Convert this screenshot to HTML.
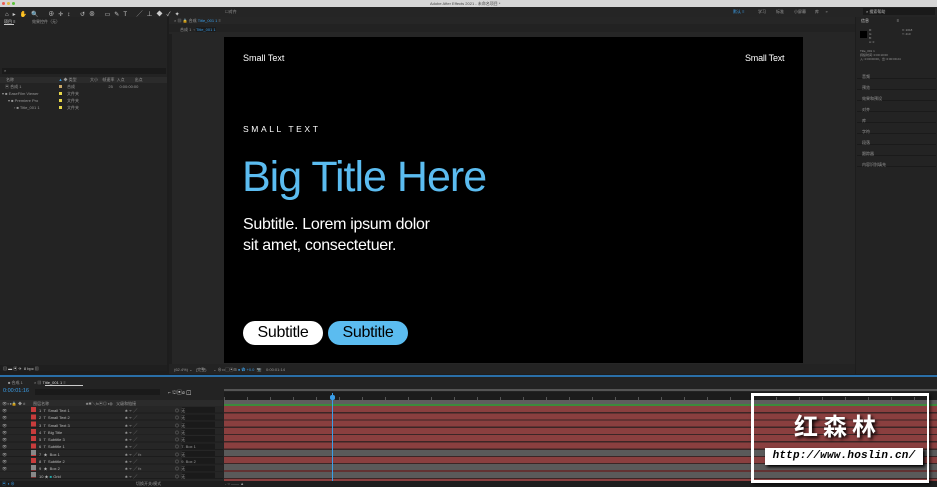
<!DOCTYPE html>
<html><head><meta charset="utf-8"><style>
*{margin:0;padding:0;box-sizing:border-box}
body{width:937px;height:486px;overflow:hidden;background:#1d1d1d;font-family:"Liberation Sans","Noto Sans CJK SC",sans-serif;color:#aaa;font-size:4px;position:relative}
.a{position:absolute}
.t{font-size:4px;color:#999;white-space:nowrap}
</style></head><body>
<div class="a" style="left:0;top:0;width:937px;height:7px;background:#d6d6d6"></div>
<div class="a" style="left:2px;top:2px;width:3px;height:3px;border-radius:50%;background:#ec5f56"></div>
<div class="a" style="left:7px;top:2px;width:3px;height:3px;border-radius:50%;background:#e3b93b"></div>
<div class="a" style="left:12px;top:2px;width:3px;height:3px;border-radius:50%;background:#5bc23c"></div>
<div class="a t" style="left:430px;top:1px;color:#444">Adobe After Effects 2021 - 未命名项目 *</div>
<div class="a" style="left:0;top:7px;width:937px;height:10px;background:#252525"></div>
<div class="a t" style="left:5px;top:9px;color:#ccc;font-size:6px;letter-spacing:4px">⌂▸✋🔍 ⊕✛↕ ↺⊗ ▭✎T ╱⊥◆✓✦</div>
<div class="a t" style="left:225px;top:9px">☐对齐</div>
<div class="a t" style="left:733px;top:9px;color:#3a9ee8">默认 ≡</div>
<div class="a t" style="left:758px;top:9px">学习 &nbsp;&nbsp;&nbsp;&nbsp;&nbsp;&nbsp;&nbsp;&nbsp;标准 &nbsp;&nbsp;&nbsp;&nbsp;&nbsp;&nbsp;&nbsp;&nbsp;小屏幕 &nbsp;&nbsp;&nbsp;&nbsp;&nbsp;&nbsp;&nbsp;库 &nbsp;&nbsp;&nbsp;&nbsp;&nbsp;»</div>
<div class="a" style="left:863px;top:8px;width:72px;height:7px;background:#1a1a1a"></div>
<div class="a t" style="left:866px;top:9px;color:#bbb">⌕ 搜索帮助</div>
<div class="a" style="left:0;top:17px;width:167px;height:353px;background:#232323"></div>
<div class="a t" style="left:4px;top:19px;color:#ddd">项目 ≡</div>
<div class="a" style="left:4px;top:24px;width:10px;height:1px;background:#ccc"></div>
<div class="a t" style="left:32px;top:19px">效果控件（无）</div>
<div class="a" style="left:2px;top:68px;width:164px;height:6px;background:#1a1a1a"></div>
<div class="a t" style="left:4px;top:68px">⌕</div>
<div class="a" style="left:0;top:77px;width:167px;height:6px;background:#2b2b2b"></div>
<div class="a t" style="left:6px;top:77px">名称 &nbsp;&nbsp;&nbsp;&nbsp;&nbsp;&nbsp;&nbsp;&nbsp;&nbsp;&nbsp;&nbsp;&nbsp;&nbsp;&nbsp;&nbsp;&nbsp;&nbsp;&nbsp;&nbsp;&nbsp;&nbsp;&nbsp;&nbsp;&nbsp;&nbsp;&nbsp;&nbsp;&nbsp;&nbsp;&nbsp;&nbsp;&nbsp;&nbsp;&nbsp;&nbsp;&nbsp;&nbsp;&nbsp;&nbsp;<span style="color:#3a9ee8">▲</span> ◆ 类型 &nbsp;&nbsp;&nbsp;&nbsp;&nbsp;&nbsp;&nbsp;&nbsp;&nbsp;&nbsp;&nbsp;大小 &nbsp;&nbsp;&nbsp;帧速率 &nbsp;入点 &nbsp;&nbsp;&nbsp;&nbsp;&nbsp;&nbsp;&nbsp;&nbsp;出点</div>
<div class="a t" style="left:5px;top:84px">▣ 合成 1</div><div class="a" style="left:59px;top:85px;width:3px;height:3px;background:#c9a86a"></div><div class="a t" style="left:67px;top:84px">合成 &nbsp;&nbsp;&nbsp;&nbsp;&nbsp;&nbsp;&nbsp;&nbsp;&nbsp;&nbsp;&nbsp;&nbsp;&nbsp;&nbsp;&nbsp;&nbsp;&nbsp;&nbsp;&nbsp;&nbsp;&nbsp;&nbsp;&nbsp;&nbsp;&nbsp;&nbsp;&nbsp;&nbsp;&nbsp;25 &nbsp;&nbsp;&nbsp;&nbsp;&nbsp;0:00:00:00</div>
<div class="a t" style="left:2px;top:91px">▾ ■ EaseFilm Viewer</div><div class="a" style="left:59px;top:92px;width:3px;height:3px;background:#e8d84a"></div><div class="a t" style="left:67px;top:91px">文件夹</div>
<div class="a t" style="left:8px;top:98px">▾ ■ Premiere Pro</div><div class="a" style="left:59px;top:99px;width:3px;height:3px;background:#e8d84a"></div><div class="a t" style="left:67px;top:98px">文件夹</div>
<div class="a t" style="left:14px;top:105px">› ■ Title_001 1</div><div class="a" style="left:59px;top:106px;width:3px;height:3px;background:#e8d84a"></div><div class="a t" style="left:67px;top:105px">文件夹</div>
<div class="a" style="left:0;top:365px;width:167px;height:6px;background:#1f1f1f"></div>
<div class="a t" style="left:3px;top:366px;color:#ccc">▤ ▬ ▣ ✈ &nbsp;8 bpc ▥</div>
<div class="a" style="left:169px;top:17px;width:686px;height:357px;background:#262626"></div>
<div class="a t" style="left:174px;top:18px">× ▦ 🔒 合成 <span style="color:#3a9ee8">Title_001 1</span> ≡</div>
<div class="a" style="left:169px;top:24px;width:686px;height:8px;background:#222"></div>
<div class="a t" style="left:180px;top:27px">合成 1 &nbsp;‹ <span style="color:#3a9ee8;background:#1b1b1b">Title_001 1</span></div>
<div class="a" style="left:169px;top:34px;width:3px;height:330px;background:#1e1e1e"></div>
<div class="a" style="left:224px;top:37px;width:579px;height:326px;background:#000"></div>
<div class="a" style="left:243px;top:53px;color:#fff;font-size:9px">Small Text</div>
<div class="a" style="left:745px;top:53px;color:#fff;font-size:9px;letter-spacing:-0.2px">Small Text</div>
<div class="a" style="left:243px;top:124px;color:#fff;font-size:8.5px;letter-spacing:2.6px">SMALL TEXT</div>
<div class="a" style="left:242px;top:152px;color:#5bbcf0;font-size:43px;letter-spacing:-1px;line-height:50px">Big Title Here</div>
<div class="a" style="left:243px;top:214px;color:#fff;font-size:16px;line-height:21px;letter-spacing:-0.3px">Subtitle. Lorem ipsum dolor<br>sit amet, consectetuer.</div>
<div class="a" style="left:243px;top:321px;width:80px;height:24px;border-radius:12px;background:#fff;color:#000;font-size:16px;text-align:center;line-height:24px;letter-spacing:-0.3px">Subtitle</div>
<div class="a" style="left:328px;top:321px;width:80px;height:24px;border-radius:12px;background:#5bbcf0;color:#000;font-size:16px;text-align:center;line-height:24px;letter-spacing:-0.3px">Subtitle</div>
<div class="a" style="left:169px;top:364px;width:686px;height:10px;background:#232323"></div>
<div class="a t" style="left:174px;top:367px">(62.4%) ⌄ &nbsp;&nbsp;(完整) &nbsp;&nbsp;&nbsp;&nbsp;&nbsp;⌄ ⊕▭▢▣⊞ <span style="color:#3a9ee8">● ✿ +0.0</span> &nbsp;📷 &nbsp;&nbsp;&nbsp;0:00:01:14</div>
<div class="a" style="left:856px;top:17px;width:81px;height:357px;background:#232323"></div>
<div class="a t" style="left:861px;top:18px;color:#ccc">信息 &nbsp;&nbsp;&nbsp;&nbsp;&nbsp;&nbsp;&nbsp;&nbsp;&nbsp;&nbsp;&nbsp;&nbsp;&nbsp;&nbsp;&nbsp;&nbsp;&nbsp;&nbsp;&nbsp;&nbsp;&nbsp;&nbsp;&nbsp;&nbsp;≡</div>
<div class="a" style="left:860px;top:31px;width:7px;height:7px;background:#000"></div>
<div class="a t" style="left:869px;top:28px;line-height:4px;font-size:3px">R:<br>G:<br>B:<br>A: 0</div>
<div class="a t" style="left:902px;top:28px;font-size:3px;line-height:4px">X: 2018<br>Y: 410</div>
<div class="a t" style="left:860px;top:49px;font-size:3px;line-height:4px">Title_001 1<br>持续时间: 0:00:10:00<br>入: 0:00:00:00，出: 0:00:09:24</div>
<div class="a" style="left:857px;top:68px;width:79px;height:100px;background:repeating-linear-gradient(#232323 0 10px,#1a1a1a 10px 11px)"></div>
<div class="a t" style="left:862px;top:71px;line-height:11px">音频<br>预览<br>效果和预设<br>对齐<br>库<br>字符<br>段落<br>跟踪器<br>内容识别填充</div>
<div class="a" style="left:0;top:375px;width:937px;height:2px;background:#2a6fa8"></div>
<div class="a" style="left:0;top:377px;width:937px;height:109px;background:#232323"></div>
<div class="a t" style="left:8px;top:380px">■ 合成 1 &nbsp;&nbsp;&nbsp;&nbsp;&nbsp;&nbsp;&nbsp;&nbsp;&nbsp;× ▦ <span style="color:#ddd">Title_001 1</span> ≡</div>
<div class="a" style="left:45px;top:385px;width:38px;height:1px;background:#ccc"></div>
<div class="a t" style="left:3px;top:388px;color:#3a9ee8;font-size:5.5px">0:00:01:16</div>
<div class="a" style="left:35px;top:389px;width:125px;height:6px;background:#1a1a1a"></div>
<div class="a t" style="left:168px;top:389px;color:#ccc;font-size:5px">⌐ ⛫▣⌀ ⊡</div>
<div class="a" style="left:0;top:400px;width:223px;height:6px;background:#2b2b2b"></div>
<div class="a t" style="left:2px;top:401px">👁◐●🔒 ◆ # &nbsp;&nbsp;&nbsp;&nbsp;&nbsp;&nbsp;图层名称 &nbsp;&nbsp;&nbsp;&nbsp;&nbsp;&nbsp;&nbsp;&nbsp;&nbsp;&nbsp;&nbsp;&nbsp;&nbsp;&nbsp;&nbsp;&nbsp;&nbsp;&nbsp;&nbsp;&nbsp;&nbsp;&nbsp;&nbsp;&nbsp;&nbsp;&nbsp;&nbsp;&nbsp;&nbsp;&nbsp;&nbsp;&nbsp;♣✱╲fx▣◎◑◍ &nbsp;&nbsp;父级和链接</div>
<div class="a" style="left:224px;top:389px;width:713px;height:2px;background:#555"></div>
<div class="a" style="left:224px;top:392px;width:713px;height:8px;background:#1c1c1c"></div>
<div class="a" style="left:224px;top:397px;width:713px;height:3px;background-image:repeating-linear-gradient(90deg,#555 0 1px,transparent 1px 23px)"></div>
<div class="a" style="left:224px;top:400px;width:713px;height:4px;background:#5e5e5e"></div>
<div class="a" style="left:224px;top:404px;width:713px;height:2px;background:#3c8a3c"></div>
<div class="a" style="left:224px;top:406px;width:713px;height:75px;background:repeating-linear-gradient(#8a3f3f 0 6px,#3b2626 6px 7.3px)"></div>
<div class="a" style="left:224px;top:450px;width:713px;height:6px;background:#5a5a5a"></div>
<div class="a" style="left:224px;top:464px;width:713px;height:6px;background:#5a5a5a"></div>
<div class="a" style="left:224px;top:472px;width:713px;height:6px;background:#5a5a5a"></div>
<div class="a" style="left:332px;top:393px;width:1px;height:88px;background:#3a9ee8"></div>
<div class="a" style="left:330px;top:395px;width:5px;height:5px;border-radius:2px;background:#3a9ee8"></div>
<div class="a" style="left:0;top:406px;width:223px;height:75px;background:repeating-linear-gradient(#262626 0 6.4px,#1c1c1c 6.4px 7.3px)"></div>
<div class="a t" style="left:2px;top:407px;line-height:7.3px">👁<br>👁<br>👁<br>👁<br>👁<br>👁<br>👁<br>👁<br>👁<br>&nbsp;</div>
<div class="a" style="left:31px;top:407px;width:5px;height:72px;background:repeating-linear-gradient(#c83c3c 0 5px,transparent 5px 7.3px)"></div>
<div class="a" style="left:31px;top:450px;width:5px;height:5px;background:#888"></div>
<div class="a" style="left:31px;top:465px;width:5px;height:5px;background:#888"></div>
<div class="a" style="left:31px;top:472px;width:5px;height:5px;background:#888"></div>
<div class="a t" style="left:39px;top:407px;line-height:7.3px;color:#bbb">1 &nbsp;T &nbsp;Small Text 1<br>2 &nbsp;T &nbsp;Small Text 2<br>3 &nbsp;T &nbsp;Small Text 3<br>4 &nbsp;T &nbsp;Big Title<br>5 &nbsp;T &nbsp;Subtitle 3<br>6 &nbsp;T &nbsp;Subtitle 1<br>7 &nbsp;★ &nbsp;Box 1<br>8 &nbsp;T &nbsp;Subtitle 2<br>9 &nbsp;★ &nbsp;Box 2<br>10 ★ <span style="color:#2aa">■</span> Grid</div>
<div class="a t" style="left:125px;top:407px;line-height:7.3px">♣ ∻ ╱<br>♣ ∻ ╱<br>♣ ∻ ╱<br>♣ ∻ ╱<br>♣ ∻ ╱<br>♣ ∻ ╱<br>♣ ∻ ╱ fx<br>♣ ∻ ╱<br>♣ ∻ ╱ fx<br>♣ ∻ ╱</div>
<div class="a" style="left:182px;top:407px;width:33px;height:72px;background:repeating-linear-gradient(#1a1a1a 0 5.5px,transparent 5.5px 7.3px)"></div>
<div class="a t" style="left:175px;top:407px;line-height:7.3px">◎ &nbsp;无<br>◎ &nbsp;无<br>◎ &nbsp;无<br>◎ &nbsp;无<br>◎ &nbsp;无<br>◎ &nbsp;7. Box 1<br>◎ &nbsp;无<br>◎ &nbsp;9. Box 2<br>◎ &nbsp;无<br>◎ &nbsp;无</div>
<div class="a" style="left:0;top:481px;width:937px;height:5px;background:#1e1e1e"></div>
<div class="a t" style="left:2px;top:481px;color:#3a9ee8">▣ ◑ ⊕</div>
<div class="a t" style="left:136px;top:481px">切换开关/模式</div>
<div class="a t" style="left:225px;top:481px">- ○ —— ▲</div>
<div class="a" style="left:751px;top:393px;width:178px;height:90px;border:3px solid #fff;border-right-width:2px;box-shadow:2px 2px 3px rgba(0,0,0,.6)"></div>
<div class="a" style="left:794px;top:410px;color:#fff;font-size:24px;font-weight:bold;letter-spacing:5px;text-shadow:2px 2px 3px #000;font-family:'Noto Sans CJK SC',sans-serif;line-height:30px">红森林</div>
<div class="a" style="left:765px;top:448px;width:158px;height:17px;background:#fff;box-shadow:2px 2px 3px #000;color:#000;font-family:'Liberation Mono',monospace;font-style:italic;font-weight:bold;font-size:11px;line-height:17px;text-align:center;letter-spacing:0.2px;overflow:hidden;white-space:nowrap">http://www.hoslin.cn/</div>
</body></html>
